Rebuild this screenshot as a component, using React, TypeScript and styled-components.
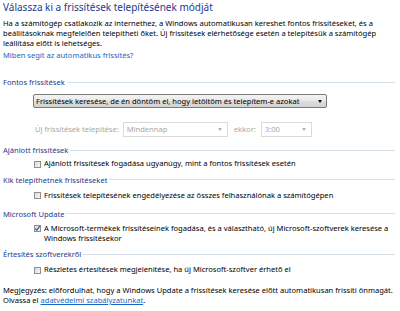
import React from "react";
import styled, { createGlobalStyle } from "styled-components";

const Global = createGlobalStyle`
  html, body { margin: 0; padding: 0; background: #ffffff; }
  body { font-family: "Noto Sans", "Open Sans", sans-serif; color: #000; }
`;

const Page = styled.div`
  width: 400px;
  height: 311px;
  overflow: hidden;
  padding: 0 0 0 3px;
  box-sizing: border-box;
  font-size: 7.55px;
  line-height: 9.8px;
`;

const Title = styled.div`
  font-size: 10px;
  line-height: 14px;
  color: #1e3a8c;
`;

const Para = styled.p<{ $top: number }>`
  margin: ${(p) => p.$top}px 0 0 0;
  padding-right: 20px;
`;

const Link = styled.a`
  color: #1a66c4;
  text-decoration: none;
`;

const ULink = styled.a`
  color: #1a66c4;
  text-decoration: underline;
`;

const SectionHead = styled.div<{ $top: number }>`
  margin-top: ${(p) => p.$top}px;
  display: flex;
  align-items: center;
  gap: 2px;
  color: #1e3a8c;
  line-height: 10px;
  &::after {
    content: "";
    flex: 1;
    height: 1px;
    background: #d6e0e8;
    margin-right: 5px;
  }
`;

const Indent = styled.div<{ $top: number }>`
  margin-top: ${(p) => p.$top}px;
  padding-left: 30px;
`;

const MainSelect = styled.div`
  width: 294px;
  height: 14px;
  box-sizing: border-box;
  border: 1px solid #7a7a7a;
  border-radius: 2px;
  background: linear-gradient(#f4f4f4, #e8e8e8 50%, #dcdcdc 51%, #d4d4d4);
  display: flex;
  align-items: center;
  justify-content: space-between;
  padding: 0 4px 0 2px;
  line-height: 12px;
  white-space: nowrap;
`;

const Arrow = styled.span<{ $disabled?: boolean }>`
  flex: none;
  width: 0;
  height: 0;
  border-left: 2.5px solid transparent;
  border-right: 2.5px solid transparent;
  border-top: 3px solid ${(p) => (p.$disabled ? "#b0b0b0" : "#000")};
`;

const ScheduleRow = styled.div`
  margin-top: 14px;
  padding-left: 32px;
  display: flex;
  align-items: center;
  color: #a8a8a8;
  height: 15px;
  white-space: nowrap;
`;

const DisSelect = styled.div<{ $w: number }>`
  width: ${(p) => p.$w}px;
  height: 15px;
  box-sizing: border-box;
  border: 1px solid #dadada;
  background: #fff;
  display: flex;
  align-items: center;
  justify-content: space-between;
  padding: 0 5px 0 3px;
  color: #a8a8a8;
`;

const Gap = styled.span<{ $w: number }>`
  display: inline-block;
  width: ${(p) => p.$w}px;
`;

const CheckRow = styled.label<{ $top: number }>`
  margin-top: ${(p) => p.$top}px;
  padding-left: 31px;
  display: flex;
  align-items: flex-start;
  gap: 3px;
  white-space: nowrap;
`;

const Box = styled.span`
  flex: none;
  width: 7px;
  height: 7px;
  margin-top: 1.5px;
  box-sizing: border-box;
  border: 1px solid #8f8f8f;
  background: linear-gradient(135deg, #dcdcdc, #f6f6f6);
  position: relative;
  display: flex;
  align-items: center;
  justify-content: center;
`;

const CheckMark = styled.svg`
  position: absolute;
  left: -1px;
  top: -1px;
`;

const Note = styled.p`
  margin: 11px 0 0 0;
  white-space: nowrap;
`;

const Check = () => (
  <CheckMark width="7" height="7" viewBox="0 0 7 7">
    <path d="M1.3 3.6 L2.8 5.2 L5.8 1.2" fill="none" stroke="#3a5aa0" strokeWidth="1.2" />
  </CheckMark>
);

const CheckItem: React.FC<{ top: number; checked?: boolean; children: React.ReactNode }> = ({ top, checked, children }) => (
  <CheckRow $top={top}>
    <Box>{checked && <Check />}</Box>
    <span>{children}</span>
  </CheckRow>
);

export default function App() {
  return (
    <>
      <Global />
      <Page>
        <Title>Válassza ki a frissítések telepítésének módját</Title>
        <Para $top={5}>
          Ha a számítógép csatlakozik az internethez, a Windows automatikusan kereshet fontos frissítéseket, és a
          <br />
          beállításoknak megfelelően telepítheti őket. Új frissítések elérhetősége esetén a telepítésük a számítógép
          <br />
          leállítása előtt is lehetséges.
        </Para>
        <Para $top={3}>
          <Link>Miben segít az automatikus frissítés?</Link>
        </Para>

        <SectionHead $top={16}>Fontos frissítések</SectionHead>
        <Indent $top={7}>
          <MainSelect>
            <span>Frissítések keresése, de én döntöm el, hogy letöltöm és telepítem-e azokat</span>
            <Arrow />
          </MainSelect>
        </Indent>
        <ScheduleRow>
          <span>Új frissítések telepítése:</span>
          <Gap $w={4} />
          <DisSelect $w={105}>
            <span>Mindennap</span>
            <Arrow $disabled />
          </DisSelect>
          <Gap $w={6} />
          <span>ekkor:</span>
          <Gap $w={5} />
          <DisSelect $w={51}>
            <span>3:00</span>
            <Arrow $disabled />
          </DisSelect>
        </ScheduleRow>

        <SectionHead $top={8}>Ajánlott frissítések</SectionHead>
        <CheckItem top={4}>Ajánlott frissítések fogadása ugyanúgy, mint a fontos frissítések esetén</CheckItem>

        <SectionHead $top={6}>Kik telepíthetnek frissítéseket</SectionHead>
        <CheckItem top={6}>Frissítések telepítésének engedélyezése az összes felhasználónak a számítógépen</CheckItem>

        <SectionHead $top={8}>Microsoft Update</SectionHead>
        <CheckItem top={5} checked>
          A Microsoft-termékek frissítéseinek fogadása, és a választható, új Microsoft-szoftverek keresése a
          <br />
          Windows frissítésekor
        </CheckItem>

        <SectionHead $top={6}>Értesítés szoftverekről</SectionHead>
        <CheckItem top={6}>Részletes értesítések megjelenítése, ha új Microsoft-szoftver érhető el</CheckItem>

        <Note>
          Megjegyzés: előfordulhat, hogy a Windows Update a frissítések keresése előtt automatikusan frissíti önmagát.
          <br />
          Olvassa el <ULink>adatvédelmi szabályzatunkat</ULink>.
        </Note>
      </Page>
    </>
  );
}
